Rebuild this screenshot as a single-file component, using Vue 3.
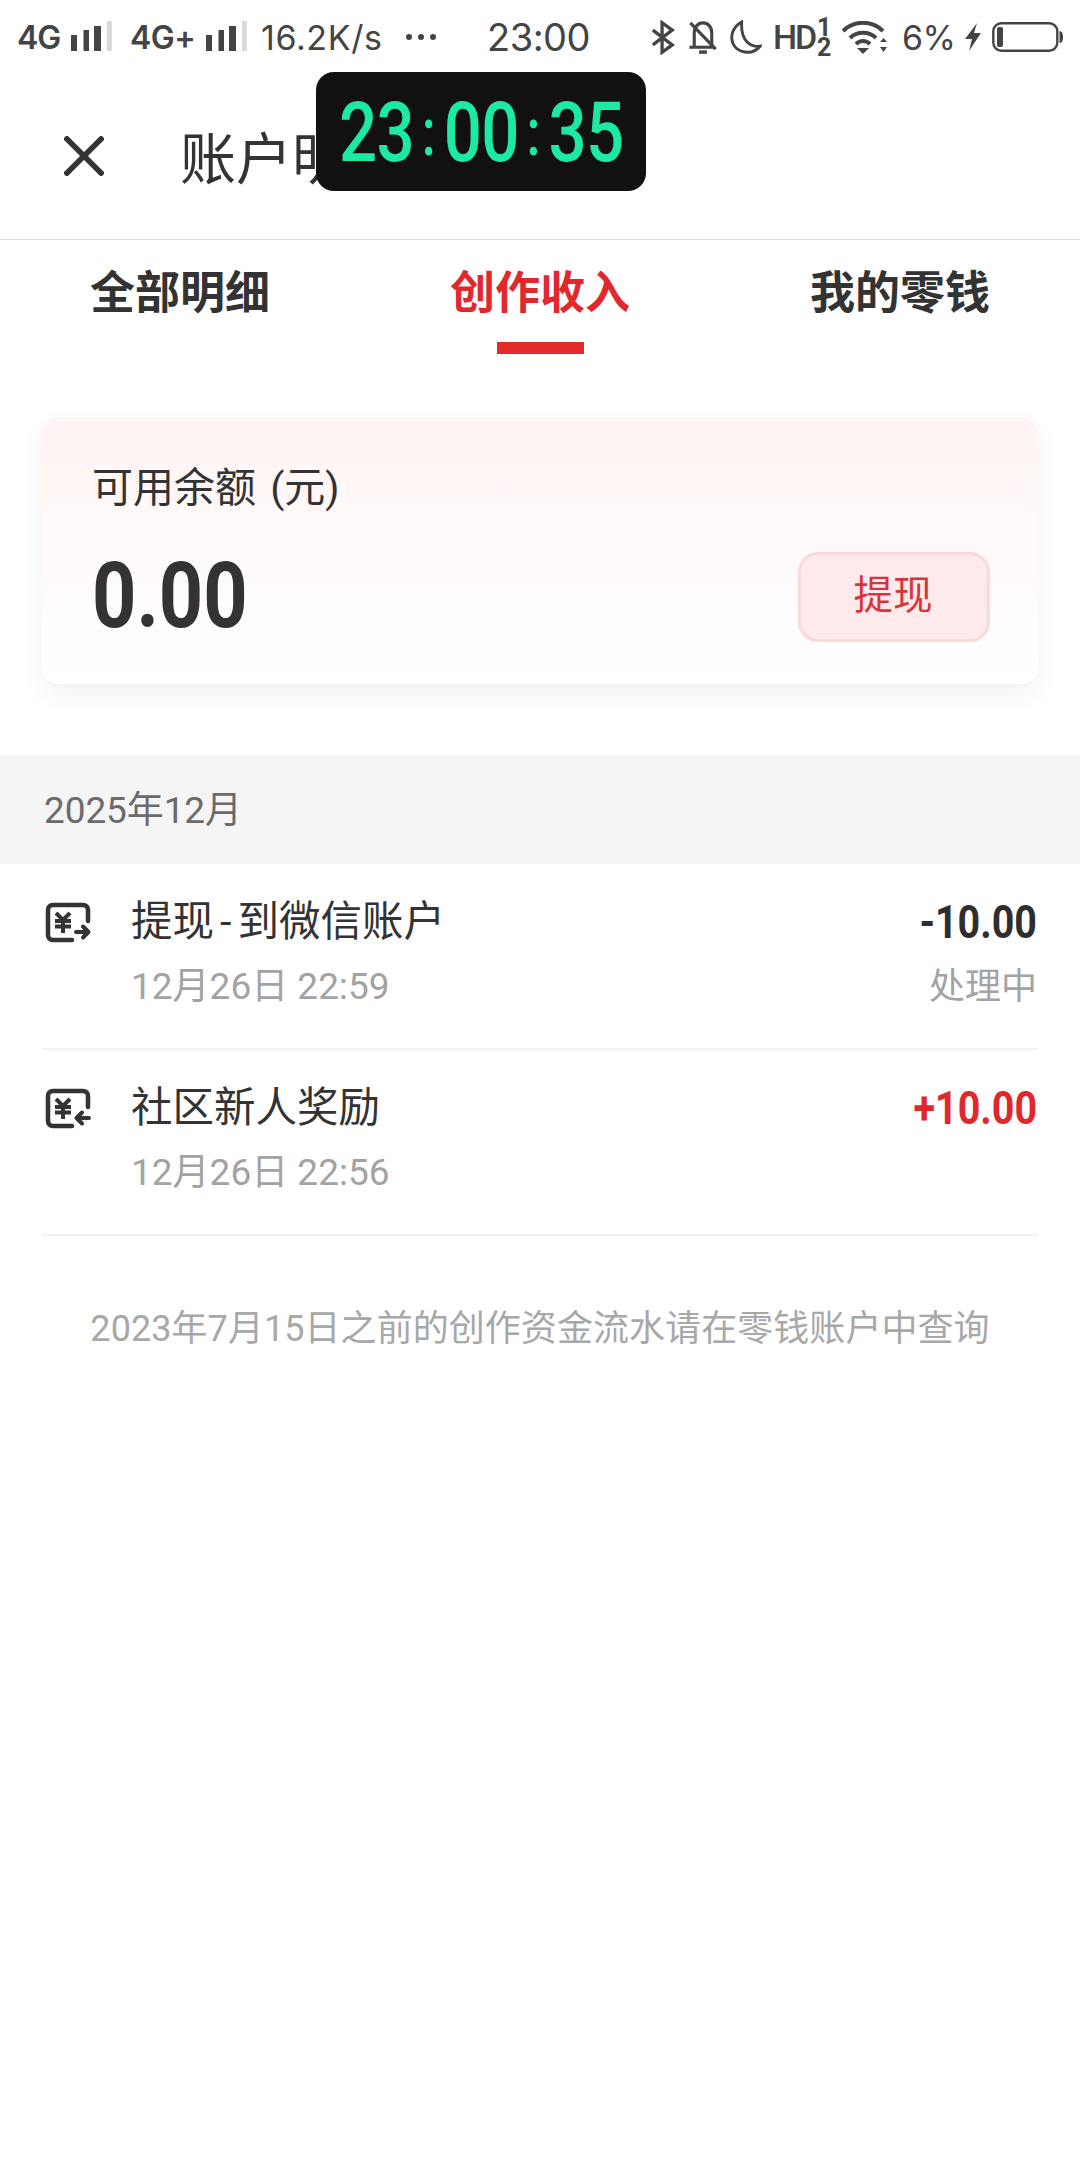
<script setup>
const rows = [
  { parts: ['提现', '到微信账户'], time: '12月26日 22:59', amount: '-10.00', status: '处理中', dir: 'out' },
  { parts: ['社区新人奖励'], time: '12月26日 22:56', amount: '+10.00', status: '', dir: 'in' }
]
const tabs = ['全部明细', '创作收入', '我的零钱']
</script>

<template>
  <div class="page">
    <div class="status">
      <span class="net">4G</span>
      <svg class="signal" viewBox="0 0 41 32"><rect x="0" y="14" width="6" height="16" fill="#444"/><rect x="12.500" y="9" width="5.500" height="21" fill="#444"/><rect x="23" y="5" width="7" height="25" fill="#444"/><rect x="36" y="0" width="5" height="30" fill="#d9d9d9"/></svg>
      <span class="net second">4G+</span>
      <svg class="signal" viewBox="0 0 41 32"><rect x="0" y="14" width="6" height="16" fill="#444"/><rect x="12.500" y="9" width="5.500" height="21" fill="#444"/><rect x="23" y="5" width="7" height="25" fill="#444"/><rect x="36" y="0" width="5" height="30" fill="#d9d9d9"/></svg>
      <span class="speed">16.2K/s</span>
      <svg class="dots" viewBox="0 0 32 8"><circle cx="4" cy="4" r="3" fill="#444"/><circle cx="16" cy="4" r="3" fill="#444"/><circle cx="28" cy="4" r="3" fill="#444"/></svg>
      <span class="time">23:00</span>
      <svg class="bt" viewBox="0 0 26 36" fill="none" stroke="#444" stroke-width="3.600"><path d="M2 10 L23 26 L12 34 L12 2 L23 10 L2 26"/></svg>
      <svg class="bell" viewBox="0 0 30 36" fill="none" stroke="#444" stroke-width="3.200"><path d="M6 27 V13 C6 7 10 3 15 3 C20 3 24 7 24 13 V27"/><path d="M1 28 H27"/><path d="M11 33 H19" stroke-width="3.600"/><path d="M2 3 L28 30"/></svg>
      <svg class="moon" viewBox="0 0 34 36" fill="none" stroke="#444" stroke-width="3"><path d="M13 2 C4 7 1 16 4 24 C8 34 24 37 32 27 C22 28 12 22 13 2 Z"/></svg>
      <span class="hd">HD</span>
      <span class="frac"><span>1</span><span>2</span></span>
      <svg class="wifi" viewBox="0 0 45 33" fill="none" stroke="#444" stroke-width="4"><path d="M1 10 C12 -1 30 -1 41 10"/><path d="M8 17 C15 10 27 10 34 17"/><path d="M14 23 C18 19 24 19 28 23"/><path d="M15 27 L21 33 L27 27 Z" fill="#444" stroke="none"/><path d="M38 21 L41.500 17 L45 21 Z M38 26 L45 26 L41.500 31 Z" fill="#444" stroke="none"/></svg>
      <span class="pct">6%</span>
      <svg class="bolt" viewBox="0 0 16 28"><path d="M12 0 L0 16 H7 L4 28 L16 10 H9 Z" fill="#444"/></svg>
      <svg class="battery" viewBox="0 0 71 30" fill="none"><rect x="1.300" y="1.300" width="64" height="27.400" rx="8" stroke="#444" stroke-width="2.400"/><rect x="5" y="5" width="6" height="20" rx="2" fill="#444"/><path d="M67.500 9 C70 9 71 11 71 15 C71 19 70 21 67.500 21 Z" fill="#444"/></svg>
    </div>

    <header class="header">
      <svg class="close" viewBox="0 0 40 40" fill="none" stroke="#333" stroke-width="5.500"><path d="M1 1 L39 39 M39 1 L1 39"/></svg>
      <span class="title">账户明细</span>
    </header>

    <nav class="tabs">
      <div v-for="(t, i) in tabs" :key="t" class="tab" :class="{ active: i === 1 }">
        <span class="tab-text">{{ t }}</span>
        <i v-if="i === 1" class="bar"></i>
      </div>
    </nav>

    <section class="card">
      <div class="label">可用余额 (元)</div>
      <div class="card-row">
        <span class="balance">0.00</span>
        <button class="withdraw">提现</button>
      </div>
    </section>

    <div class="month">2025年12月</div>

    <div v-for="r in rows" :key="r.time" class="row">
      <svg class="row-icon" viewBox="0 0 50 44" fill="none" stroke="#333" stroke-width="4.500" stroke-linecap="round" stroke-linejoin="round">
        <path d="M46 21 V10 C46 7 44 5 41 5 H11 C8 5 6 7 6 10 V35 C6 38 8 40 11 40 H30"/>
        <path d="M14 13 L21 20 L28 13 M13 21 H29 M13 26.500 H29 M21 20 V33" stroke-width="4" stroke-linecap="butt" stroke-linejoin="miter"/>
        <path v-if="r.dir === 'out'" d="M34 32 H45 M41 26.500 L46.500 32 L41 37.500" stroke-width="4"/>
        <path v-else d="M47 32 H36 M40 26.500 L34.500 32 L40 37.500" stroke-width="4"/>
      </svg>
      <div class="row-main">
        <div class="row-title">{{ r.parts[0] }}<span v-if="r.parts[1]" class="dash">-</span>{{ r.parts[1] }}</div>
        <div class="row-time">{{ r.time }}</div>
      </div>
      <div class="row-side">
        <div class="amount" :class="{ plus: r.dir === 'in' }">{{ r.amount }}</div>
        <div v-if="r.status" class="row-status">{{ r.status }}</div>
      </div>
    </div>

    <p class="note">2023年7月15日之前的创作资金流水请在零钱账户中查询</p>

    <div class="clock">
      <div class="clock-inner">
        <span class="cg">23</span><span class="cc">:</span><span class="cg">00</span><span class="cc">:</span><span class="cg">35</span>
      </div>
    </div>
  </div>
</template>

<style>
html, body { margin: 0; background: #fff; }
</style>

<style scoped>
.page {
  position: relative;
  width: 1080px;
  min-height: 2160px;
  background: #fff;
  overflow: hidden;
  font-family: Roboto, "Noto Sans CJK SC", sans-serif;
  color: #333;
}
.status {
  display: flex;
  align-items: center;
  height: 60px;
  padding: 14px 0 0 17px;
  box-sizing: border-box;
  font-family: Inter, "Noto Sans CJK SC", sans-serif;
  color: #444;
  white-space: nowrap;
}
.status > span { flex: none; }
.net { width: 44px; font-size: 32px; font-weight: 600; letter-spacing: -1px; }
.second { width: 66px; margin-left: 18px; letter-spacing: -.5px; }
.signal { width: 41px; height: 32px; margin-left: 10px; flex: none; }
.speed { width: 121px; font-size: 34px; margin-left: 14px; letter-spacing: .6px; }
.dots { width: 32px; height: 8px; margin-left: 23px; flex: none; }
.time { width: 103px; font-size: 38px; margin-left: 50px; letter-spacing: -.5px; }
.bt { width: 24px; height: 35px; margin-left: 61px; flex: none; }
.bell { width: 30px; height: 35px; margin-left: 13px; flex: none; }
.moon { width: 33px; height: 35px; margin-left: 11px; flex: none; }
.hd { width: 41px; font-family: Roboto, sans-serif; font-size: 34px; font-weight: 500; margin-left: 11px; letter-spacing: -2.200px; }
.frac { display: flex; flex-direction: column; width: 14px; margin: 2px 0 0 3px; font-family: Roboto, sans-serif; font-size: 25px; font-weight: 700; line-height: 20px; text-align: center; }
.wifi { width: 45px; height: 33px; margin-left: 11px; flex: none; }
.pct { width: 50px; font-size: 34px; margin-left: 15px; letter-spacing: -.5px; }
.bolt { width: 16px; height: 28px; margin-left: 13px; flex: none; }
.battery { width: 71px; height: 30px; margin-left: 11px; flex: none; }

.header {
  display: flex;
  align-items: center;
  height: 179px;
  padding: 0 0 0 64px;
  border-bottom: 1px solid #ddd;
}
.close { width: 40px; height: 40px; flex: none; margin-top: 13px; }
.title { font-size: 56px; margin-left: 76px; margin-top: 20px; line-height: 70px; }

.tabs { display: grid; grid-template-columns: repeat(3, 360px); height: 114px; }
.tab { display: flex; flex-direction: column; align-items: center; padding-top: 24px; box-sizing: border-box; }
.tab-text { font-size: 45px; line-height: 60px; font-weight: 700; }
.active { color: #e1282d; }
.bar { width: 87px; height: 12px; margin-top: 18px; background: #e52a2d; }

.card {
  margin: 63px 42px 0;
  padding: 42px 48px 42px 51px;
  border-radius: 18px;
  background: linear-gradient(180deg, #fff4f3 0%, #fffafa 50%, #ffffff 100%);
  box-shadow: 0 10px 26px rgba(0, 0, 0, .055);
}
.label { font-size: 41px; line-height: 56px; margin-top: 1px; margin-bottom: -1px; color: #333; word-spacing: 4px; margin-left: -1px; }
.card-row { display: flex; justify-content: space-between; align-items: center; margin-top: 37px; height: 90px; }
.balance { font-size: 90px; font-weight: 700; line-height: 90px; margin-left: -1px; transform: scaleX(.86); transform-origin: left center; }
.withdraw {
  width: 192px;
  height: 90px;
  padding: 0 2px 12px 0;
  border: 3px solid #f9d9d9;
  border-radius: 20px;
  background: #feeaea;
  color: #d6353b;
  font: 39.500px "Noto Sans CJK SC", sans-serif;
}

.month {
  margin-top: 71px;
  height: 109px;
  padding-left: 44px;
  background: #f5f5f5;
  font-size: 37px;
  line-height: 112px;
  letter-spacing: -.1px;
  color: #6b6b6b;
}
.row {
  display: flex;
  height: 186px;
  margin: 0 42px;
  padding-top: 30px;
  box-sizing: border-box;
  border-bottom: 2px solid #f2f2f2;
}
.row-icon { width: 50px; height: 44px; flex: none; margin: 6px 39px 0 0; }
.row-main { flex: 1; }
.row-title { font-size: 41.500px; line-height: 56px; color: #333; }
.dash { display: inline-block; padding: 0 6px; }
.row-time { font-size: 37px; line-height: 52px; margin-top: 11px; color: #a3a3a3; }
.row-side { text-align: right; padding-right: 1px; }
.amount { font-size: 47px; font-weight: 700; line-height: 56px; color: #2e2e2e; transform: scaleX(.84); transform-origin: right center; }
.plus { color: #e0282c; }
.row-status { font-size: 36px; line-height: 52px; margin-top: 11px; color: #a3a3a3; }
.note {
  margin: 0;
  padding-top: 67px;
  font-size: 36px;
  line-height: 52px;
  letter-spacing: .06px;
  text-align: center;
  color: #a8a8a8;
}

.clock {
  position: absolute;
  left: 316px;
  top: 72px;
  width: 330px;
  height: 119px;
  border-radius: 18px;
  background: #111;
  font-family: Roboto, sans-serif;
  color: #1de9a6;
}
.clock-inner {
  display: flex;
  align-items: center;
  width: 380px;
  height: 100%;
  margin-left: 23px;
  padding-top: 3px;
  box-sizing: border-box;
  transform: scaleX(.8);
  transform-origin: left center;
  font-size: 84px;
  font-weight: 500;
  line-height: 116px;
}
.cg { width: 93px; letter-spacing: -1px; text-align: center; flex: none; }
.cc { width: 38px; text-align: center; flex: none; font-size: 66px; }
</style>
